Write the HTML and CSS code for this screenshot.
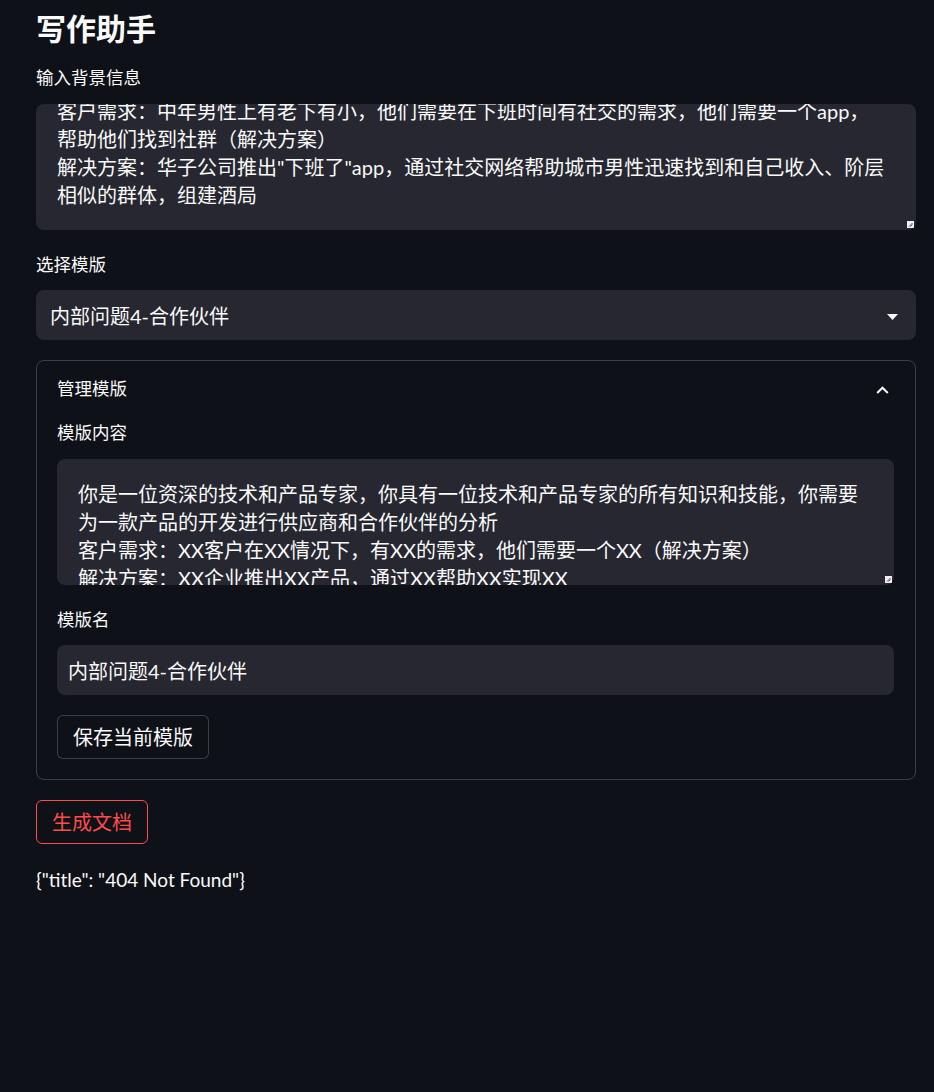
FILE: index.html
```html
<!DOCTYPE html>
<html lang="zh-CN">
<head>
<meta charset="utf-8">
<title>写作助手</title>
<link rel="stylesheet" href="styles.css">
</head>
<body>
<main class="main">
  <h1 class="title">写作助手</h1>

  <section class="field">
    <label class="label">输入背景信息</label>
    <div class="textarea textarea-scrolled">
      <div class="ta-content">
        <div class="ta-line">客户需求：中年男性上有老下有小，他们需要在下班时间有社交的需求，他们需要一个app，</div>
        <div class="ta-line">帮助他们找到社群（解决方案）</div>
        <div class="ta-line">解决方案：华子公司推出"下班了"app，通过社交网络帮助城市男性迅速找到和自己收入、阶层</div>
        <div class="ta-line">相似的群体，组建酒局</div>
      </div>
      <svg class="grip" width="7" height="7" viewBox="0 0 7 7"><rect x="0" y="0" width="7" height="7" fill="#f0f0f0"/><path d="M2 5.5 L5.5 2 M3.5 5.5 L5.5 3.5" stroke="#555" stroke-width="1"/></svg>
    </div>
  </section>

  <section class="field">
    <label class="label">选择模版</label>
    <div class="select">
      <span>内部问题4-合作伙伴</span>
      <svg class="caret" width="11" height="6" viewBox="0 0 11 6"><path d="M0 0 H11 L5.5 6 Z" fill="#fafafa"/></svg>
    </div>
  </section>

  <section class="expander">
    <div class="exp-header">
      <span>管理模版</span>
      <svg class="chevron" width="13" height="8" viewBox="0 0 13 8"><path d="M1.2 7 L6.5 1.7 L11.8 7" fill="none" stroke="#fafafa" stroke-width="2"/></svg>
    </div>
    <div class="exp-body">
      <section class="field">
        <label class="label">模版内容</label>
        <div class="textarea textarea-inner">
          <div class="ta-line">你是一位资深的技术和产品专家，你具有一位技术和产品专家的所有知识和技能，你需要</div>
          <div class="ta-line">为一款产品的开发进行供应商和合作伙伴的分析</div>
          <div class="ta-line">客户需求：XX客户在XX情况下，有XX的需求，他们需要一个XX（解决方案）</div>
          <div class="ta-line">解决方案：XX企业推出XX产品，通过XX帮助XX实现XX</div>
          <svg class="grip" width="7" height="7" viewBox="0 0 7 7"><rect x="0" y="0" width="7" height="7" fill="#f0f0f0"/><path d="M2 5.5 L5.5 2 M3.5 5.5 L5.5 3.5" stroke="#555" stroke-width="1"/></svg>
        </div>
      </section>

      <section class="field">
        <label class="label">模版名</label>
        <div class="input">内部问题4-合作伙伴</div>
      </section>

      <button class="btn">保存当前模版</button>
    </div>
  </section>

  <button class="btn btn-primary">生成文档</button>

  <p class="output">{"title": "404 Not Found"}</p>
</main>
</body>
</html>
```

FILE: styles.css
```css
* {
  box-sizing: border-box;
}

html, body {
  margin: 0;
  padding: 0;
  background: #0e1117;
}

body {
  color: #fafafa;
  font-family: "Source Sans Pro", Lato, "Noto Sans CJK SC", sans-serif;
  font-size: 20px;
  min-height: 1092px;
}

.main {
  width: 880px;
  margin-left: 36px;
  padding-top: 10px;
  display: flex;
  flex-direction: column;
  align-items: flex-start;
}

.title {
  margin: 0;
  font-size: 30px;
  line-height: 34px;
  font-weight: 700;
  font-family: "Noto Sans CJK SC", sans-serif;
  letter-spacing: 0;
}

.field {
  width: 100%;
  display: flex;
  flex-direction: column;
  margin-top: 23px;
}

.label {
  font-size: 17.5px;
  line-height: 22px;
  margin-bottom: 15px;
  color: #fafafa;
}

.textarea {
  position: relative;
  width: 100%;
  height: 126px;
  background: #262730;
  border-radius: 8px;
  overflow: hidden;
  line-height: 28px;
  font-size: 20px;
  white-space: nowrap;
}

.textarea-scrolled {
  padding: 0 20px 0 21px;
}

.ta-content {
  margin-top: -7px;
}

.textarea-inner {
  padding: 21px 20px 0 21px;
}

.grip {
  position: absolute;
  right: 2px;
  bottom: 2px;
  display: block;
}

.field + .field {
  margin-top: 24px;
}

.field + .field .label {
  margin-bottom: 14px;
}

.select {
  width: 100%;
  height: 50px;
  background: #262730;
  border-radius: 8px;
  display: flex;
  align-items: center;
  justify-content: space-between;
  padding: 0 18px 0 14px;
  font-size: 20px;
}

.caret {
  display: block;
  margin-top: 3px;
}

.expander {
  width: 100%;
  margin-top: 20px;
  border: 1px solid rgba(250, 250, 250, 0.2);
  border-radius: 8px;
}

.exp-header {
  display: flex;
  align-items: center;
  justify-content: space-between;
  padding: 17px 26px 0 20px;
  font-size: 17.5px;
  line-height: 22px;
}

.chevron {
  display: block;
  margin-top: 2px;
}

.exp-body {
  display: flex;
  flex-direction: column;
  align-items: flex-start;
  padding: 0 21px 20px 20px;
}

.exp-body .field:first-child {
  margin-top: 22px;
}

.input {
  width: 100%;
  height: 50px;
  background: #262730;
  border-radius: 8px;
  display: flex;
  align-items: center;
  padding-left: 11px;
  font-size: 20px;
}

.btn {
  margin-top: 20px;
  height: 44px;
  padding: 0 15px;
  background: #0e1117;
  color: #fafafa;
  border: 1px solid rgba(250, 250, 250, 0.2);
  border-radius: 6px;
  font-family: inherit;
  font-size: 20px;
  line-height: 20px;
  display: flex;
  align-items: center;
  justify-content: center;
}

.btn-primary {
  color: #ff4b4b;
  border-color: #ff4b4b;
  height: 44px;
}

.output {
  margin: 24px 0 0 0;
  font-size: 19px;
  line-height: 24px;
}
```
